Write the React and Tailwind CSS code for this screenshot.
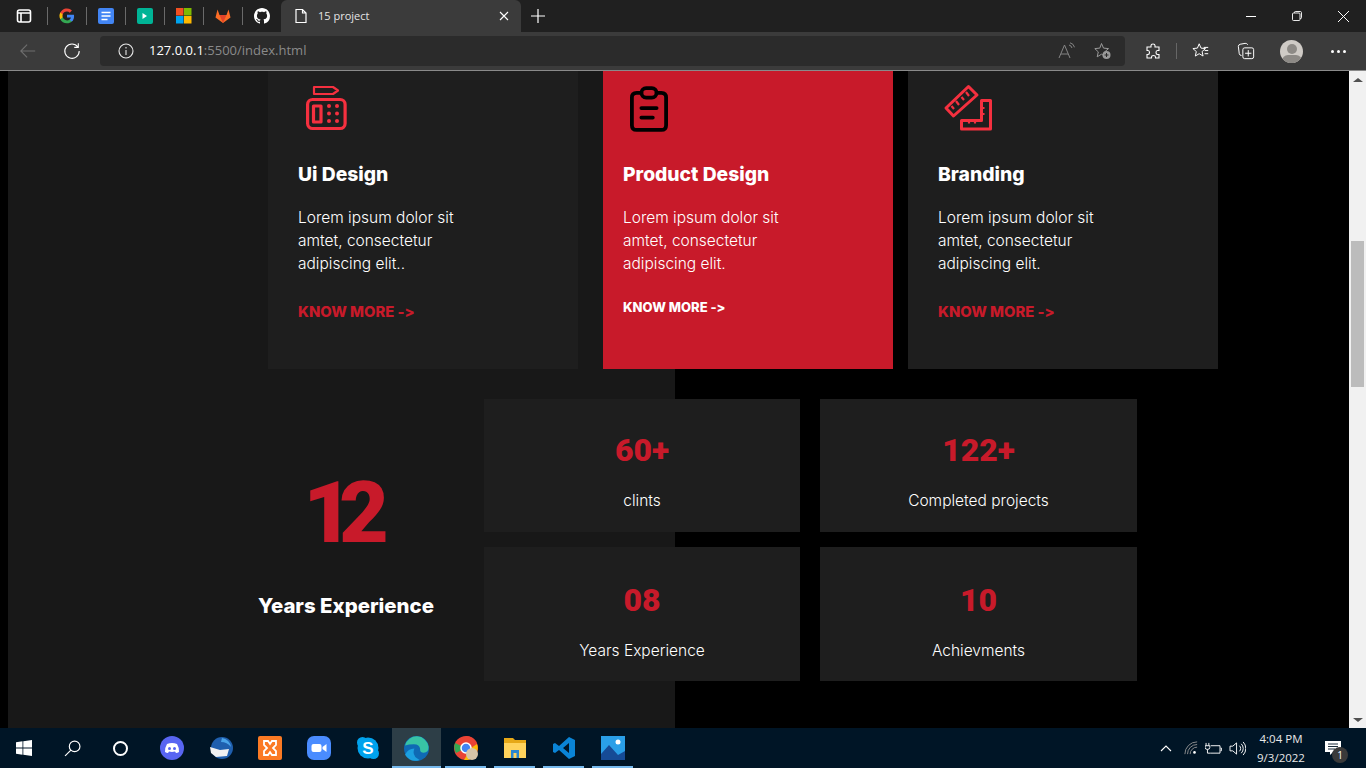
import React from "react";

function Favicons() {
  const Sep = () => <div className="w-px h-[18px] bg-[#6a6a6a] mx-[11px]" />;
  return (
    <div className="flex items-center w-[281px] pl-[16px]">
      <svg viewBox="0 0 16 16" width="16" height="16" fill="none" stroke="#fff" strokeWidth="1.6"><rect x="1.5" y="2" width="13" height="12" rx="2" /><path d="M1.500 5h13M5 5v9" /></svg>
      <div className="w-[15px]" />
      <div className="w-px h-[18px] bg-[#6a6a6a] mr-[11px]" />
      <svg viewBox="0 0 24 24" width="16" height="16">
        <path fill="#4285F4" d="M22.6 12.2c0-.8-.1-1.5-.2-2.2H12v4.3h5.9a5 5 0 0 1-2.2 3.3v2.8h3.6c2.1-1.9 3.3-4.8 3.3-8.2z" />
        <path fill="#34A853" d="M12 23c3 0 5.5-1 7.3-2.7l-3.6-2.8a6.8 6.8 0 0 1-10.1-3.6H1.9v2.9A11 11 0 0 0 12 23z" />
        <path fill="#FBBC05" d="M5.6 13.9a6.6 6.6 0 0 1 0-4.2V6.8H1.9a11 11 0 0 0 0 9.9z" />
        <path fill="#EA4335" d="M12 5.4c1.6 0 3.1.6 4.2 1.6l3.2-3.2A11 11 0 0 0 1.9 6.8l3.7 2.9A6.6 6.6 0 0 1 12 5.4z" />
      </svg>
      <Sep />
      <svg viewBox="0 0 16 16" width="16" height="16"><rect width="16" height="16" rx="2" fill="#4285F4" /><path d="M3.500 4.500h9M3.500 8h9M3.500 11.500h6" stroke="#fff" strokeWidth="1.6" /></svg>
      <Sep />
      <svg viewBox="0 0 16 16" width="16" height="16"><rect width="16" height="16" rx="2" fill="#00b496" /><path d="M5.500 5l4.500 3-4.500 3z" fill="#fff" /></svg>
      <Sep />
      <svg viewBox="0 0 16 16" width="16" height="16"><rect width="7.5" height="7.5" fill="#f25022" /><rect x="8" width="7.5" height="7.5" fill="#7fba00" /><rect y="8" width="7.5" height="7.5" fill="#00a4ef" /><rect x="8" y="8" width="7.5" height="7.5" fill="#ffb900" /></svg>
      <Sep />
      <svg viewBox="0 0 16 16" width="16" height="16"><path d="M8 15L.5 9.500 2.500 1.500l2 5.500h7l2-5.500 2 8z" fill="#fc6d26" /><path d="M8 15L4.500 7h7z" fill="#e24329" /></svg>
      <Sep />
      <svg viewBox="0 0 16 16" width="16" height="16" fill="#fff"><path d="M8 0C3.58 0 0 3.58 0 8c0 3.54 2.29 6.53 5.47 7.59.4.07.55-.17.55-.38 0-.19-.01-.82-.01-1.49-2.01.37-2.53-.49-2.69-.94-.09-.23-.48-.94-.82-1.13-.28-.15-.68-.52-.01-.53.63-.01 1.08.58 1.23.82.72 1.21 1.87.87 2.33.66.07-.52.28-.87.51-1.07-1.78-.2-3.64-.89-3.64-3.95 0-.87.31-1.59.82-2.15-.08-.2-.36-1.02.08-2.12 0 0 .67-.21 2.2.82.64-.18 1.32-.27 2-.27s1.36.09 2 .27c1.53-1.04 2.2-.82 2.2-.82.44 1.1.16 1.92.08 2.12.51.56.82 1.27.82 2.15 0 3.07-1.87 3.75-3.65 3.95.29.25.54.73.54 1.48 0 1.07-.01 1.93-.01 2.2 0 .21.15.46.55.38A8.01 8.01 0 0 0 16 8c0-4.42-3.58-8-8-8z" /></svg>
    </div>
  );
}

function Chrome() {
  return (
    <div className="shrink-0 font-['Roboto',sans-serif]">
      <div className="h-[32px] bg-[#202020] flex items-center">
        <Favicons />
        <div className="w-[240px] h-[32px] bg-[#3b3b3b] rounded-t-[6px] flex items-center pl-[12px] pr-[12px] text-white">
          <svg viewBox="0 0 16 16" width="16" height="16" fill="none" stroke="#fff" strokeWidth="1.2"><path d="M3 1.500h6.500L13 5v9.500H3zM9.500 1.500V5H13" /></svg>
          <span className="ml-[9px] text-[11px] text-[#e4e4e4] font-['Open_Sans',sans-serif]">15 project</span>
          <svg viewBox="0 0 10 10" width="10" height="10" className="ml-auto" stroke="#fff" strokeWidth="1.1"><path d="M1 1l8 8M9 1l-8 8" /></svg>
        </div>
        <svg viewBox="0 0 14 14" width="14" height="14" className="ml-[10px]" stroke="#fff" strokeWidth="1.2"><path d="M7 0v14M0 7h14" /></svg>
        <div className="ml-auto flex items-center">
          <div className="w-[46px] flex justify-center"><div className="w-[10px] h-px bg-white" /></div>
          <div className="w-[46px] flex justify-center">
            <svg viewBox="0 0 10 10" width="10" height="10" fill="none" stroke="#fff" strokeWidth="0.9"><rect x="0.5" y="2" width="7.5" height="7.5" rx="1" /><path d="M2.500 2V1.300q0-.8.8-.8h5q1.200 0 1.200 1.200v5q0 .8-.8.8H8" /></svg>
          </div>
          <div className="w-[46px] flex justify-center">
            <svg viewBox="0 0 10 10" width="11" height="11" stroke="#fff" strokeWidth="0.9"><path d="M0 0l10 10M10 0L0 10" /></svg>
          </div>
        </div>
      </div>
      <div className="h-[38px] bg-[#3b3b3b] flex items-center border-b border-[#8a8a8a] box-content">
        <svg viewBox="0 0 20 20" width="18" height="18" fill="none" stroke="#6f6f6f" strokeWidth="1.2" className="ml-[19px]"><path d="M18 10H2M9 3l-7 7 7 7" /></svg>
        <svg viewBox="0 0 20 20" width="18" height="18" fill="none" stroke="#fff" strokeWidth="1.2" className="ml-[26px]"><path d="M16.500 5.500A8 8 0 1 0 18 10M17 1.500v4.500h-4.500" /></svg>
        <div className="ml-[19px] w-[1025px] h-[30px] bg-[#2b2b2b] rounded-[4px] flex items-center pl-[18px]">
          <svg viewBox="0 0 16 16" width="16" height="16" fill="none" stroke="#e8e8e8" strokeWidth="1.1"><circle cx="8" cy="8" r="7" /><path d="M8 7v5M8 4v1.400" /></svg>
          <span className="ml-[15px] text-white font-['Open_Sans',sans-serif] text-[13px]">127.0.0.1<span className="text-[#8a8a8a]">:5500/index.html</span></span>
          <div className="ml-auto flex items-center pr-[12px] gap-[17px]">
            <svg viewBox="0 0 18 18" width="18" height="18" fill="none" stroke="#858585" strokeWidth="1"><path d="M1 16L6.500 3 12 16M3 12h7M11 3a4 4 0 0 1 3 3M12 .8a6 6 0 0 1 4.500 4.500" /></svg>
            <svg viewBox="0 0 20 20" width="20" height="20"><path d="M8.500 2.500l2 4.600 5 .5-3.800 3.300 1.100 4.900-4.300-2.600-4.300 2.600 1.100-4.900L1.800 7.600l5-.5z" fill="none" stroke="#9a9a9a" strokeWidth="1" /><circle cx="13.500" cy="14" r="4" fill="#9a9a9a" /><path d="M11.500 14h4M13.500 12v4" stroke="#2b2b2b" strokeWidth="1" /></svg>
          </div>
        </div>
        <svg viewBox="0 0 16 16" width="16" height="16" fill="none" stroke="#fff" strokeWidth="1.1" className="ml-[20px]"><path d="M6 2.500q0-1.500 2-1.500t2 1.500V4h4v3.500h-1.500q-1.500 0-1.500 2t1.500 2H14V15h-3.500v-1q0-1.500-2-1.500t-2 1.500v1H2v-3.500h1q1.500 0 1.500-2T3 7.500H2V4h4z" /></svg>
        <div className="w-px h-[16px] bg-[#666] ml-[15px]" />
        <svg viewBox="0 0 20 20" width="18" height="18" fill="none" stroke="#fff" strokeWidth="1.1" className="ml-[15px]"><path d="M8 2l2 4.800 5 .5-3.800 3.300 1.100 5L8 13l-4.300 2.600 1.100-5L1 7.300l5-.5zM13 6h5M14 9.500h4M14 13h4" /></svg>
        <svg viewBox="0 0 20 20" width="18" height="18" fill="none" stroke="#fff" strokeWidth="1.1" className="ml-[27px]"><path d="M5 15q-2 0-2.500-2L1.500 5q0-2 2-2.500L9 1.500q2-.2 3 1.500" /><rect x="6.500" y="6.500" width="12" height="12" rx="2" /><path d="M12.500 9v7M9 12.500h7" /></svg>
        <div className="ml-[25px] w-[23px] h-[23px] rounded-full bg-[#cfcbc6] overflow-hidden flex flex-col items-center">
          <div className="w-[10px] h-[10px] rounded-full bg-[#8d8a86] mt-[4px] shrink-0" />
          <div className="w-[20px] h-[12px] rounded-full bg-[#8d8a86] mt-[1px] shrink-0" />
        </div>
        <div className="ml-[28px] flex gap-[3px]">
          <div className="w-[3px] h-[3px] rounded-full bg-white" />
          <div className="w-[3px] h-[3px] rounded-full bg-white" />
          <div className="w-[3px] h-[3px] rounded-full bg-white" />
        </div>
      </div>
    </div>
  );
}

function ServiceIconPad() {
  return (
    <svg viewBox="0 0 48 48" width="48" height="48" fill="none" stroke="#f5303f" strokeWidth="3.2" strokeLinejoin="round">
      <path d="M8 3h19l5 3.500-5 3.500H8z" strokeWidth="2.200" />
      <rect x="1.600" y="15.500" width="37.500" height="29" rx="5" />
      <rect x="7.500" y="22" width="7.500" height="16" />
      <g fill="#f5303f" stroke="none">
        <circle cx="23" cy="22" r="2" /><circle cx="31" cy="22" r="2" />
        <circle cx="23" cy="29.500" r="2" /><circle cx="31" cy="29.500" r="2" />
        <circle cx="23" cy="37" r="2" /><circle cx="31" cy="37" r="2" />
      </g>
    </svg>
  );
}

function ServiceIconClip() {
  return (
    <svg viewBox="0 0 40 48" width="38" height="46" fill="none" stroke="#000" strokeWidth="4" strokeLinecap="round" strokeLinejoin="round">
      <path d="M12 7H7q-5 0-5 5v29q0 5 5 5h26q5 0 5-5V12q0-5-5-5h-5" />
      <rect x="12" y="2" width="16" height="10" rx="5" />
      <path d="M12 23h16M12 33h12" />
    </svg>
  );
}

function ServiceIconRuler() {
  return (
    <svg viewBox="0 0 50 48" width="50" height="48" fill="none" stroke="#f5303f" strokeWidth="3" strokeLinejoin="round">
      <path d="M25.500 2.500l8.500 8.500-23.500 21L3 24z" />
      <path d="M11 25l-2.500-3M16 21l-3-4M21 16l-2.500-3M26 12l-3-4" strokeWidth="2.200" />
      <path d="M38.500 16.500h9v28.500H18.500v-8.500h20z" />
      <path d="M38.500 24h3M38.500 30h3M26 36.500v3M32 36.500v3" strokeWidth="2.200" />
    </svg>
  );
}

function Card({ icon, title, text, bg, iconCls, linkCls, cardCls }) {
  return (
    <div className={`${cardCls} ${bg} h-[298px] shrink-0 flex flex-col`}>
      <div className={`${iconCls} h-[60px] mt-[13px] flex items-start`}>{icon}</div>
      <h3 className="text-[19.3px] leading-[28px] font-extrabold text-white mt-[16px]">{title}</h3>
      <p className="mt-[18px] text-[15.5px] leading-[23px] font-light text-white w-[185px]">{text}</p>
      <a className={linkCls}>KNOW MORE -&gt;</a>
    </div>
  );
}

function Stat({ num, label, cls, numCls }) {
  return (
    <div className={`${cls} bg-[#1e1e1e] flex flex-col items-center`}>
      <div className={`${numCls} font-['Roboto',sans-serif] text-[32px] leading-[40px] font-black text-[#c81a2a]`}>{num}</div>
      <div className="text-[15.5px] leading-[24px] font-light text-white mt-[19px]">{label}</div>
    </div>
  );
}

function Page() {
  return (
    <div className="flex-1 h-full overflow-hidden bg-[linear-gradient(to_right,#000_8px,#181818_8px,#181818_675px,#000_675px)] font-['Inter',sans-serif] [font-variant-ligatures:none] [font-feature-settings:'calt'_0]">
      <div className="flex pl-[268px]">
        <Card
          cardCls="w-[310px] pl-[30px]"
          icon={<ServiceIconPad />}
          iconCls="pl-[8px]"
          title="Ui Design"
          text="Lorem ipsum dolor sit amtet, consectetur adipiscing elit.."
          bg="bg-[#1e1e1e]"
          linkCls="mt-[25px] text-[14.8px] leading-[24px] font-extrabold text-[#c81a2a]"
        />
        <div className="w-[25px]" />
        <Card
          cardCls="w-[290px] pl-[20px]"
          icon={<div className="mt-[2px]"><ServiceIconClip /></div>}
          iconCls="pl-[7px]"
          title="Product Design"
          text="Lorem ipsum dolor sit amtet, consectetur adipiscing elit."
          bg="bg-[#c81a2a]"
          linkCls="mt-[20px] text-[13px] leading-[24px] font-extrabold text-white"
        />
        <div className="w-[15px]" />
        <Card
          cardCls="w-[310px] pl-[30px]"
          icon={<ServiceIconRuler />}
          iconCls="pl-[5px]"
          title="Branding"
          text="Lorem ipsum dolor sit amtet, consectetur adipiscing elit."
          bg="bg-[#1e1e1e]"
          linkCls="mt-[25px] text-[14.8px] leading-[24px] font-extrabold text-[#c81a2a]"
        />
      </div>
      <div className="flex mt-[30px]">
        <div className="w-[484px] pt-[64px] flex flex-col items-center pl-[208px]">
          <div className="font-['Roboto',sans-serif] text-[86px] leading-[100px] font-black text-[#c81a2a] tracking-[-14px] pr-[14px]">12</div>
          <div className="text-[20.4px] leading-[28px] font-extrabold text-white mt-[29px] whitespace-nowrap">Years Experience</div>
        </div>
        <div className="grid grid-cols-[316px_317px] gap-x-[20px] gap-y-[15px]">
          <Stat cls="h-[133px]" numCls="mt-[31px]" num="60+" label="clints" />
          <Stat cls="h-[133px]" numCls="mt-[31px]" num="122+" label="Completed projects" />
          <Stat cls="h-[134px]" numCls="mt-[33px]" num="08" label="Years Experience" />
          <Stat cls="h-[134px]" numCls="mt-[33px]" num="10" label="Achievments" />
        </div>
      </div>
    </div>
  );
}

function Scrollbar() {
  return (
    <div className="w-[17px] h-full bg-[#f1f1f1] flex flex-col items-center shrink-0">
      <div className="h-[17px] flex items-center"><div className="w-0 h-0 border-x-[5px] border-x-transparent border-b-[4px] border-b-[#505050]" /></div>
      <div className="w-[13px] h-[146px] mt-[153px] bg-[#bcbcbc]" />
      <div className="mt-auto h-[17px] flex items-center"><div className="w-0 h-0 border-x-[5px] border-x-transparent border-t-[4px] border-t-[#505050]" /></div>
    </div>
  );
}

function Taskbar() {
  const first = "w-[48px] h-full flex items-center justify-center";
  const cell = "w-[49px] h-full flex items-center justify-center relative";
  const Under = () => <div className="absolute bottom-0 left-[4px] right-[4px] h-[2px] bg-[#76b9ed]" />;
  return (
    <div className="h-[40px] shrink-0 bg-[#001526] flex items-center font-['Open_Sans',sans-serif]">
      <div className={first}>
        <svg viewBox="0 0 16 16" width="16" height="16" fill="#fff"><path d="M0 2.200l6.500-.9v6.300H0zM7.300 1.200L16 0v7.600H7.300zM0 8.400h6.500v6.300L0 13.800zM7.300 8.400H16V16l-8.700-1.200z" /></svg>
      </div>
      <div className={first}>
        <svg viewBox="0 0 16 16" width="17" height="17" fill="none" stroke="#fff" strokeWidth="1.1"><circle cx="10" cy="6" r="5" /><path d="M6.500 9.500L1 15" /></svg>
      </div>
      <div className={first}><div className="w-[15px] h-[15px] rounded-full border-2 border-white" /></div>
      <div className="w-[3px]" />
      <div className={cell}>
        <svg viewBox="0 0 24 24" width="24" height="24"><circle cx="12" cy="12" r="12" fill="#5865f2" /><path d="M7 8q5-2 10 0 2 3 2 8-1.500 1-3 1l-1-1.500q-3 .8-6 0L8 17q-1.500 0-3-1 0-5 2-8z" fill="#fff" /><circle cx="9.500" cy="12.500" r="1.500" fill="#5865f2" /><circle cx="14.500" cy="12.500" r="1.500" fill="#5865f2" /></svg>
      </div>
      <div className={cell}>
        <svg viewBox="0 0 24 24" width="24" height="24"><circle cx="13" cy="12" r="11" fill="#1f5fae" /><path d="M13 2a10 10 0 0 1 9 9q-4-5-10-5z" fill="#4aa3e8" /><path d="M1 11l10 3 9-1-2 7-11 1-5-4z" fill="#f1f1f1" /></svg>
      </div>
      <div className={cell}>
        <svg viewBox="0 0 24 24" width="24" height="24"><rect width="24" height="24" rx="2" fill="#fb7a24" /><path d="M6 5h4l2 3 2-3h4v4l-3 3 3 3v4h-4l-2-3-2 3H6v-4l3-3-3-3z" fill="none" stroke="#fff" strokeWidth="1.8" /></svg>
      </div>
      <div className={cell}>
        <svg viewBox="0 0 24 24" width="24" height="24"><rect width="24" height="24" rx="7" fill="#4a8cff" /><rect x="4.500" y="8" width="10" height="8" rx="2" fill="#fff" /><path d="M15.500 11l4-3v8l-4-3z" fill="#fff" /></svg>
      </div>
      <div className={cell}>
        <svg viewBox="0 0 24 24" width="24" height="24"><circle cx="12" cy="12" r="10.500" fill="#00a2ed" /><circle cx="6.500" cy="6.500" r="5.500" fill="#00a2ed" /><circle cx="17.500" cy="17.500" r="5.500" fill="#00a2ed" /><text x="12" y="18" textAnchor="middle" fill="#fff" fontSize="17" fontWeight="700" fontFamily="Liberation Sans">S</text></svg>
      </div>
      <div className={`${cell} bg-[#2d3e47]`}>
        <svg viewBox="0 0 24 24" width="25" height="25"><circle cx="12" cy="12" r="12" fill="#0f6ab4" /><path d="M1 9a11.500 11.500 0 0 1 22.500 1q.5 6-4.500 6-4 0-3.500-3.500-.5-4.500-6-4.500-5 0-8.500 1z" fill="#38c3a5" /><path d="M10 12q-3 7 5 11-9 3-14-5 3-6 9-6z" fill="#1ca0e0" /></svg>
        <div className="absolute bottom-0 left-0 right-0 h-[2px] bg-[#76b9ed]" />
      </div>
      <div className={cell}>
        <svg viewBox="0 0 24 24" width="24" height="24"><circle cx="12" cy="12" r="12" fill="#ea4335" /><path d="M12 12L2 17A12 12 0 0 1 1 7z" fill="#34a853" /><path d="M12 0a12 12 0 0 1 11 8H12z" fill="#ea4335" /><path d="M23 8a12 12 0 0 1-13 16l7-12z" fill="#fbbc05" /><circle cx="12" cy="12" r="5" fill="#4285f4" stroke="#fff" strokeWidth="1.5" /><circle cx="18" cy="18" r="6" fill="#d7c4a8" /></svg>
        <Under />
      </div>
      <div className={cell}>
        <svg viewBox="0 0 24 24" width="24" height="24"><path d="M1 2h9l2 2h11v5H1z" fill="#e6a817" /><rect x="1" y="7" width="22" height="15" fill="#ffd35c" /><rect x="8" y="14" width="8" height="8" fill="#2a86d0" /><rect x="10.500" y="17" width="3" height="5" fill="#ffd35c" /></svg>
        <Under />
      </div>
      <div className={cell}>
        <svg viewBox="0 0 24 24" width="24" height="24"><path d="M17 1l6 3v16l-6 3-10-9-4 3-2-1V8l2-1 4 3zM17 7l-6 5 6 5z" fill="#0a84d6" /></svg>
        <Under />
      </div>
      <div className={cell}>
        <svg viewBox="0 0 24 24" width="24" height="24"><rect width="24" height="24" fill="#2a9fe8" /><path d="M0 18l8-9 9 10 7-4v9H0z" fill="#164b96" /><circle cx="17" cy="6" r="2.500" fill="#fff" /></svg>
        <Under />
      </div>
      <div className="ml-auto flex items-center h-full text-white pr-[8px]">
        <svg viewBox="0 0 12 8" width="12" height="8" fill="none" stroke="#fff" strokeWidth="1.1"><path d="M1 7l5-5 5 5" /></svg>
        <svg viewBox="0 0 16 16" width="14" height="14" fill="none" stroke="#999" strokeWidth="1" className="ml-[12px]"><path d="M1 15a14 14 0 0 1 14-14M4 15A11 11 0 0 1 15 4M7 15a8 8 0 0 1 8-8" /><circle cx="12" cy="13" r="1.500" fill="#fff" stroke="none" /></svg>
        <svg viewBox="0 0 18 14" width="17" height="13" fill="none" stroke="#fff" strokeWidth="1" className="ml-[7px]"><path d="M6 4h10v8H6M1 1v3M4 1v3M0 4h5v2q0 2-2.500 2T0 6zM2.500 8v4h3.500" /><path d="M16.500 6.500h1v3h-1" /></svg>
        <svg viewBox="0 0 18 16" width="17" height="15" fill="none" stroke="#fff" strokeWidth="1" className="ml-[7px]"><path d="M1 5.500h3L8 2v12l-4-3.500H1zM11 5a4 4 0 0 1 0 6M13 3a7 7 0 0 1 0 10M15 1a10 10 0 0 1 0 14" /></svg>
        <div className="ml-[8px] w-[54px] flex flex-col items-center text-[11.5px] leading-[19px] text-[#e8e8e8]">
          <span>4:04 PM</span>
          <span>9/3/2022</span>
        </div>
        <div className="w-[50px] h-full flex items-center justify-center relative">
          <svg viewBox="0 0 16 15" width="16" height="15" fill="#fff"><path d="M0 0h16v11H8l-3 3v-3H0z" /><path d="M3 3h10M3 5.500h10M3 8h7" stroke="#001526" strokeWidth="0.9" /></svg>
          <div className="absolute left-[24px] top-[19px] w-[16px] h-[16px] rounded-full bg-[#3a3a3a] text-[10px] leading-[16px] text-center text-white">1</div>
        </div>
      </div>
    </div>
  );
}

export default function App() {
  return (
    <div className="w-[1366px] h-[768px] overflow-hidden flex flex-col bg-black">
      <Chrome />
      <div className="flex-1 min-h-0 flex">
        <Page />
        <Scrollbar />
      </div>
      <Taskbar />
    </div>
  );
}
